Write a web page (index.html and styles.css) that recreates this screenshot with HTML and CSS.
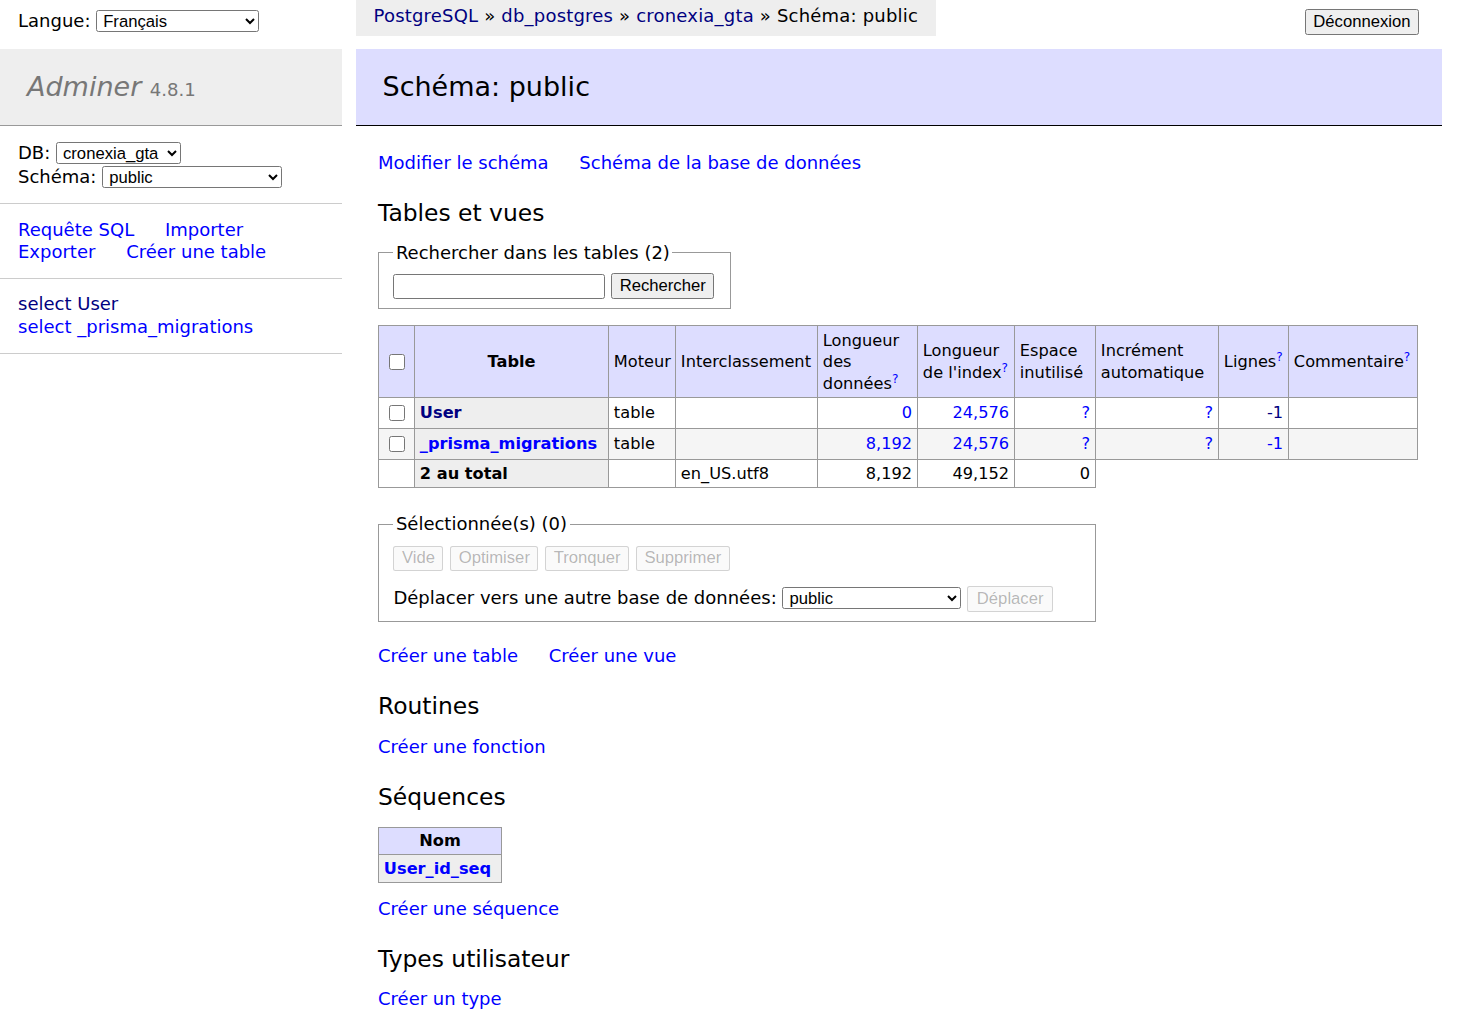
FILE: index.html
```html
<!DOCTYPE html>
<html lang="fr">
<head>
<meta charset="utf-8">
<title>Schéma: public - cronexia_gta - Adminer</title>
<link rel="stylesheet" href="styles.css">
</head>
<body>
<header class="topbar">
  <form class="lang">Langue: <select class="sel sel-lang"><option>English</option><option selected>Français</option><option>Deutsch</option><option>Español</option></select></form>
  <nav class="breadcrumb"><a class="v" href="#">PostgreSQL</a> » <a class="v" href="#">db_postgres</a> » <a class="v" href="#">cronexia_gta</a> » Schéma: public</nav>
  <div class="logout"><button class="btn" type="button">Déconnexion</button></div>
</header>
<div class="page">
  <aside class="menu">
    <h1 class="brand"><a href="#" class="brand-link">Adminer</a> <span class="version">4.8.1</span></h1>
    <p class="mblock dbs">DB: <select class="sel sel-db"><option>cronexia_gta</option></select><br>Schéma: <select class="sel sel-ns"><option>public</option></select></p>
    <p class="mblock links"><a href="#">Requête SQL</a> <a href="#">Importer</a> <a href="#">Exporter</a> <a href="#">Créer une table</a></p>
    <ul class="mblock tables">
      <li><a class="v" href="#">select</a> <a class="v" href="#">User</a></li>
      <li><a href="#">select</a> <a href="#">_prisma_migrations</a></li>
    </ul>
  </aside>
  <main class="content">
    <h2 class="title">Schéma: public</h2>
    <div class="inner">
      <p class="links"><a href="#">Modifier le schéma</a> <a href="#">Schéma de la base de données</a></p>
      <h3 class="sub">Tables et vues</h3>
      <form class="search-form">
        <fieldset class="fs">
          <legend class="lg">Rechercher dans les tables (2)</legend>
          <div><input class="txt" type="search"> <button class="btn" type="button">Rechercher</button></div>
        </fieldset>
      </form>
      <table class="grid">
        <colgroup>
          <col class="w-cb"><col class="w-name"><col class="w-eng"><col class="w-coll"><col class="w-data"><col class="w-idx"><col class="w-free"><col class="w-ai"><col class="w-rows"><col class="w-com">
        </colgroup>
        <thead>
          <tr class="hrow">
            <td><input class="cb" type="checkbox"></td>
            <th>Table</th>
            <td>Moteur</td>
            <td>Interclassement</td>
            <td>Longueur<br>des<br>données<a href="#"><sup>?</sup></a></td>
            <td>Longueur<br>de l'index<a href="#"><sup>?</sup></a></td>
            <td>Espace<br>inutilisé</td>
            <td>Incrément<br>automatique</td>
            <td>Lignes<a href="#"><sup>?</sup></a></td>
            <td>Commentaire<a href="#"><sup>?</sup></a></td>
          </tr>
        </thead>
        <tbody>
          <tr class="brow">
            <td><input class="cb" type="checkbox"></td>
            <th><a class="v" href="#">User</a></th>
            <td>table</td>
            <td></td>
            <td class="num"><a href="#">0</a></td>
            <td class="num"><a href="#">24,576</a></td>
            <td class="num"><a href="#">?</a></td>
            <td class="num"><a href="#">?</a></td>
            <td class="num"><a class="v" href="#">-1</a></td>
            <td></td>
          </tr>
          <tr class="brow alt">
            <td><input class="cb" type="checkbox"></td>
            <th><a href="#">_prisma_migrations</a></th>
            <td>table</td>
            <td></td>
            <td class="num"><a href="#">8,192</a></td>
            <td class="num"><a href="#">24,576</a></td>
            <td class="num"><a href="#">?</a></td>
            <td class="num"><a href="#">?</a></td>
            <td class="num"><a href="#">-1</a></td>
            <td></td>
          </tr>
          <tr class="trow">
            <td></td>
            <th>2 au total</th>
            <td></td>
            <td>en_US.utf8</td>
            <td class="num">8,192</td>
            <td class="num">49,152</td>
            <td class="num">0</td>
          </tr>
        </tbody>
      </table>
      <div class="footer">
        <fieldset class="fs fs-wide">
          <legend class="lg">Sélectionnée(s) (0)</legend>
          <div class="actions"><button class="btn btn-off" type="button" disabled>Vide</button> <button class="btn btn-off" type="button" disabled>Optimiser</button> <button class="btn btn-off" type="button" disabled>Tronquer</button> <button class="btn btn-off" type="button" disabled>Supprimer</button></div>
          <p class="move">Déplacer vers une autre base de données: <select class="sel sel-move"><option>public</option></select> <button class="btn btn-off btn-move" type="button" disabled>Déplacer</button></p>
        </fieldset>
      </div>
      <p class="links"><a href="#">Créer une table</a> <a href="#">Créer une vue</a></p>
      <h3 class="sub">Routines</h3>
      <p class="links"><a href="#">Créer une fonction</a></p>
      <h3 class="sub">Séquences</h3>
      <table class="grid seq">
        <thead><tr><th>Nom</th></tr></thead>
        <tbody><tr><th><a href="#">User_id_seq</a></th></tr></tbody>
      </table>
      <p class="links"><a href="#">Créer une séquence</a></p>
      <h3 class="sub">Types utilisateur</h3>
      <p class="links"><a href="#">Créer un type</a></p>
    </div>
  </main>
</div>
</body>
</html>
```

FILE: styles.css
```css
body {
  margin: 0;
  font: 18px/1.25 "DejaVu Sans", Verdana, sans-serif;
  color: #000;
  background: #fff;
}
a { color: #0000ff; text-decoration: none; }
a.v { color: #000080; }

/* form controls */
.sel, .btn, .txt {
  font-family: "Liberation Sans", Arial, sans-serif;
  font-size: 16.67px;
  box-sizing: border-box;
}
.sel {
  height: 22px;
  border: 1px solid #767676;
  border-radius: 2.5px;
  background: #fff;
  color: #000;
  padding: 0 0 0 2px;
}
.sel-lang { width: 163px; }
.sel-db { width: 125px; }
.sel-ns { width: 180px; }
.sel-move { width: 179px; }
.btn {
  height: 26px;
  padding: 1px 7.5px;
  border: 1px solid #767676;
  border-radius: 2.5px;
  background: #efefef;
  color: #000;
  vertical-align: middle;
  margin: 0 1px 0 0;
}
.btn-off {
  height: 25px;
  color: rgba(16, 16, 16, .3);
  background: rgba(239, 239, 239, .3);
  border-color: rgba(118, 118, 118, .3);
}
.btn-move { height: 26px; width: 86px; }
.txt {
  width: 212px;
  height: 25px;
  border: 1px solid #767676;
  border-radius: 2.5px;
  padding: 1px 2.5px;
  vertical-align: middle;
  margin: 0;
}
.cb {
  width: 16px;
  height: 16px;
  margin: 3.75px 3.75px 3.75px 5px;
  vertical-align: middle;
}

/* top bar */
.topbar {
  display: flex;
  align-items: flex-start;
  height: 36px;
}
.lang {
  flex: none;
  width: 355.5px;
  box-sizing: border-box;
  padding: 5.4px 18px;
  line-height: 32.4px;
  white-space: nowrap;
  margin: 0;
}
.breadcrumb {
  flex: none;
  height: 36px;
  line-height: 32.4px;
  padding: 0 18px;
  background: #eee;
  white-space: nowrap;
  box-sizing: border-box;
  letter-spacing: 0.2px;
}
.logout { margin: 9px 47px 0 auto; }

/* page */
.page {
  display: flex;
  align-items: flex-start;
}
.menu {
  flex: none;
  width: 342px;
  margin-top: 12.5px;
}
.brand {
  margin: 0;
  padding: 21.6px 27px;
  font-size: 27px;
  line-height: 1.25;
  font-weight: normal;
  color: #777;
  background: #eee;
  border-bottom: 1px solid #999;
}
.brand-link { color: #777; font-style: italic; }
.version { font-size: 67%; color: #777; }
.mblock {
  margin: 0;
  padding: 14.4px 18px;
  border-bottom: 1px solid #ccc;
}
.dbs { line-height: 24px; }
.tables { list-style: none; white-space: nowrap; }
.links a { margin-right: 25px; white-space: nowrap; }

.content {
  flex: 1;
  min-width: 0;
  margin-left: 13.5px;
  padding: 12.5px 25px 25px 0;
}
.title {
  margin: 0 0 25px;
  padding: 21.6px 27px;
  font-size: 27px;
  line-height: 1.25;
  font-weight: normal;
  background: #ddf;
  border-bottom: 1px solid #000;
}
.inner { padding-left: 22.5px; }
.inner p { margin: 14.4px 25px 0 0; }
.inner .links:first-child { padding-top: 1px; }
.sub {
  margin: 24.5px 0 0;
  font-size: 23.4px;
  line-height: 1.25;
  font-weight: normal;
}
.search-form { margin: 0; }

.fs {
  display: block;
  width: max-content;
  min-width: 0;
  margin: 13px 9px 0 0;
  padding: 9px 14.4px;
  border: 1px solid #999;
}
.fs-wide { width: 718px; box-sizing: border-box; margin-top: 0; padding-bottom: 9px; }
.lg { padding: 0 2.5px; }
.actions { padding-top: 1px; }
.inner .move { margin: 15px 0 0; }

/* tables */
.grid {
  border-collapse: collapse;
  font-size: 16.2px;
  line-height: 1.25;
  margin: 16.2px 25px 0 0;
}
.grid td, .grid th {
  border: 1px solid #999;
  padding: 3.24px 4.86px;
  white-space: nowrap;
}
.grid th { background: #eee; text-align: left; }
.grid thead td, .grid thead th { background: #ddf; }
.grid thead th { text-align: center; padding: 3.24px 8.1px; }
.grid sup { font-size: 75%; line-height: 0; vertical-align: 6px; }
.grid .num { text-align: right; }
.grid .alt td { background: #f5f5f5; }

.grid:not(.seq) { table-layout: fixed; width: 1039px; }
.hrow { height: 72px; line-height: 21.5px; }
.brow { height: 31px; }
.trow { height: 28px; }
.w-cb { width: 36px; }
.w-name { width: 194px; }
.w-eng { width: 67px; }
.w-coll { width: 142px; }
.w-data { width: 100px; }
.w-idx { width: 97px; }
.w-free { width: 81px; }
.w-ai { width: 123px; }
.w-rows { width: 70px; }
.w-com { width: 129px; }

.grid.seq { width: 124px; margin-top: 14.5px; }
.seq tbody th { height: 28px; box-sizing: border-box; }

.footer { padding: 25px 0 9px; }
```
